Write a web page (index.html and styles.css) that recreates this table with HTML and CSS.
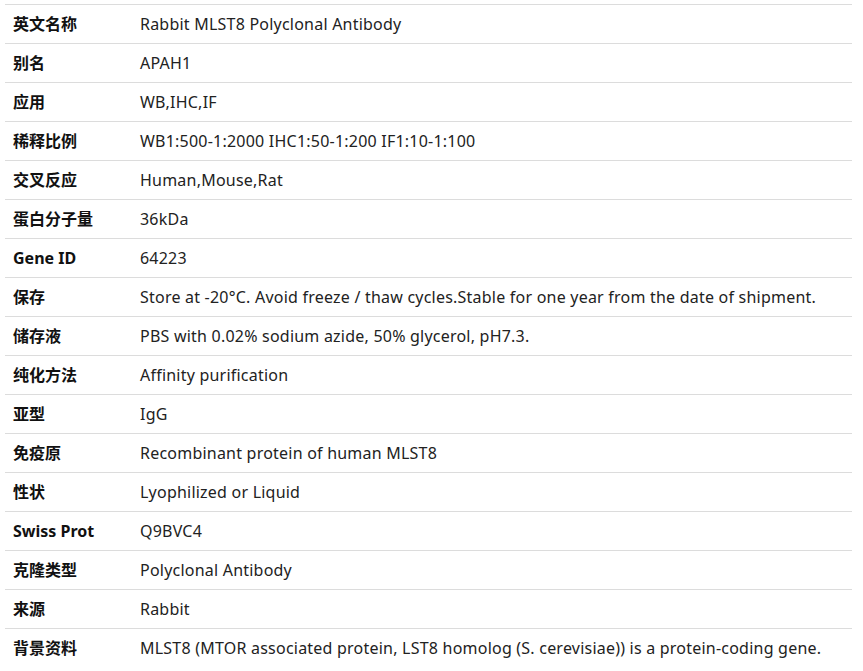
FILE: index.html
```html
<!DOCTYPE html>
<html>
<head>
<meta charset="utf-8">
<link rel="stylesheet" href="styles.css">
</head>
<body>
<table class="spec">
<tr><th>英文名称</th><td>Rabbit MLST8 Polyclonal Antibody</td></tr>
<tr><th>别名</th><td>APAH1</td></tr>
<tr><th>应用</th><td>WB,IHC,IF</td></tr>
<tr><th>稀释比例</th><td>WB1:500-1:2000 IHC1:50-1:200 IF1:10-1:100</td></tr>
<tr><th>交叉反应</th><td>Human,Mouse,Rat</td></tr>
<tr><th>蛋白分子量</th><td>36kDa</td></tr>
<tr><th>Gene ID</th><td>64223</td></tr>
<tr><th>保存</th><td>Store at -20°C. Avoid freeze / thaw cycles.Stable for one year from the date of shipment.</td></tr>
<tr><th>储存液</th><td>PBS with 0.02% sodium azide, 50% glycerol, pH7.3.</td></tr>
<tr><th>纯化方法</th><td>Affinity purification</td></tr>
<tr><th>亚型</th><td>IgG</td></tr>
<tr><th>免疫原</th><td>Recombinant protein of human MLST8</td></tr>
<tr><th>性状</th><td>Lyophilized or Liquid</td></tr>
<tr><th>Swiss Prot</th><td>Q9BVC4</td></tr>
<tr><th>克隆类型</th><td>Polyclonal Antibody</td></tr>
<tr><th>来源</th><td>Rabbit</td></tr>
<tr><th>背景资料</th><td>MLST8 (MTOR associated protein, LST8 homolog (S. cerevisiae)) is a protein-coding gene.</td></tr>
</table>
</body>
</html>
```
FILE: styles.css
```css
html, body {
  margin: 0;
  padding: 0;
  background: #fff;
}
body {
  padding: 4px 11px 0 5px;
  font-family: "Noto Sans", "Noto Sans CJK SC", sans-serif;
  font-size: 16px;
  color: #222;
}
.spec {
  width: 847px;
  border-collapse: collapse;
}
.spec th, .spec td {
  border-top: 1px solid #dcdcdc;
  height: 38px;
  padding: 0 8px;
  text-align: left;
  vertical-align: middle;
  white-space: nowrap;
  line-height: 20px;
}
.spec th {
  width: 111px;
  font-weight: bold;
  color: #111;
}
.spec td {
  font-weight: normal;
  letter-spacing: 0.22px;
}
```
